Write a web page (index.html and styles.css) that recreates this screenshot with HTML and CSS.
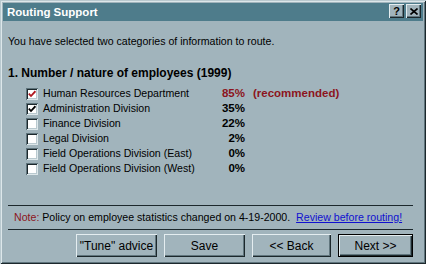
FILE: index.html
```html
<!DOCTYPE html>
<html lang="en">
<head>
    <meta charset="UTF-8">
    <title>Routing Support</title>
    <link rel="stylesheet" href="styles.css">
</head>
<body>
    <div class="window">
        <!-- Title bar -->
        <div class="titlebar">
            <span class="title">Routing Support</span>
            <div class="title-buttons">
                <button class="tbtn">?</button>
                <button class="tbtn">
                    <svg width="8" height="7" viewBox="0 0 8 7"><path d="M0.5 0.5 L7.5 6.5 M7.5 0.5 L0.5 6.5" stroke="#000" stroke-width="1.6" fill="none"/></svg>
                </button>
            </div>
        </div>

        <!-- Content -->
        <div class="content">
            <p class="intro">You have selected two categories of information to route.</p>
            <h2 class="heading">1. Number / nature of employees (1999)</h2>
            <div class="rows">
                <div class="row">
                    <span class="check"><svg width="8" height="8" viewBox="0 0 8 8"><path d="M0.8 3.6 L3 6 L7.4 1.2" stroke="#b01820" stroke-width="1.8" fill="none"/></svg></span>
                    <span class="label">Human Resources Department</span>
                    <span class="pct red">85%</span>
                    <span class="rec">(recommended)</span>
                </div>
                <div class="row">
                    <span class="check"><svg width="8" height="8" viewBox="0 0 8 8"><path d="M0.8 3.6 L3 6 L7.4 1.2" stroke="#000" stroke-width="1.8" fill="none"/></svg></span>
                    <span class="label">Administration Division</span>
                    <span class="pct">35%</span>
                </div>
                <div class="row">
                    <span class="check"></span>
                    <span class="label">Finance Division</span>
                    <span class="pct">22%</span>
                </div>
                <div class="row">
                    <span class="check"></span>
                    <span class="label">Legal Division</span>
                    <span class="pct">2%</span>
                </div>
                <div class="row">
                    <span class="check"></span>
                    <span class="label">Field Operations Division (East)</span>
                    <span class="pct">0%</span>
                </div>
                <div class="row">
                    <span class="check"></span>
                    <span class="label">Field Operations Division (West)</span>
                    <span class="pct">0%</span>
                </div>
            </div>
        </div>

        <!-- Footer -->
        <div class="footer">
            <div class="sep"></div>
            <p class="note"><span class="note-label">Note:</span> Policy on employee statistics changed on 4-19-2000. &nbsp;<a href="#">Review before routing!</a></p>
            <div class="sep"></div>
            <div class="buttons">
                <button class="btn btn-tune">"Tune" advice</button>
                <button class="btn btn-save">Save</button>
                <button class="btn btn-back">&lt;&lt; Back</button>
                <button class="btn btn-next">Next &gt;&gt;</button>
            </div>
        </div>
    </div>
</body>
</html>
```

FILE: styles.css
```css
body {
    margin: 0;
    padding: 0;
    background-color: #a1b4bc;
    font-family: "Liberation Sans", Arial, sans-serif;
    font-size: 10.6px;
    color: #000;
}
.window {
    width: 426px;
    height: 264px;
    box-sizing: border-box;
    padding: 3px;
    display: flex;
    flex-direction: column;
    background-color: #a1b4bc;
    box-shadow: inset 1px 1px 0 #b9c9cf, inset -1px -1px 0 #1c282c, inset 2px 2px 0 #dde7ea, inset -2px -2px 0 #5f747c;
}
.titlebar {
    height: 18px;
    background-color: #4e7c8b;
    display: flex;
    justify-content: space-between;
    align-items: flex-start;
    padding: 1px 2px 0 4px;
    box-sizing: border-box;
}
.title {
    color: #fff;
    font-weight: bold;
    font-size: 11.5px;
    line-height: 17px;
}
.title-buttons {
    display: flex;
    gap: 2px;
}
.tbtn {
    width: 15px;
    height: 14px;
    padding: 0;
    border: none;
    background-color: #a1b4bc;
    font-family: "Liberation Sans", Arial, sans-serif;
    font-weight: bold;
    font-size: 11px;
    line-height: 14px;
    color: #000;
    display: flex;
    align-items: center;
    justify-content: center;
    box-shadow: inset 1px 1px 0 #e4edf0, inset -1px -1px 0 #1c282c, inset -2px -2px 0 #61767e;
}
.content {
    flex: 1;
}
.intro {
    margin: 14px 0 0 5px;
    line-height: 13px;
}
.heading {
    margin: 19px 0 0 5px;
    font-size: 12px;
    font-weight: bold;
    line-height: 13px;
}
.rows {
    margin: 6px 0 0 23px;
}
.row {
    display: flex;
    align-items: center;
    height: 15px;
}
.check {
    width: 12px;
    height: 12px;
    box-sizing: border-box;
    background-color: #fff;
    display: flex;
    align-items: center;
    justify-content: center;
    box-shadow: inset 1px 1px 0 #5f747c, inset -1px -1px 0 #dde7ea, inset 2px 2px 0 #1c282c, inset -2px -2px 0 #b9c9cf;
}
.label {
    width: 171px;
    margin-left: 5px;
    line-height: 13px;
}
.pct {
    width: 31px;
    text-align: right;
    font-weight: bold;
    font-size: 11.5px;
    line-height: 13px;
}
.red, .rec {
    color: #8c1420;
}
.rec {
    font-weight: bold;
    font-size: 11.5px;
    margin-left: 8px;
    line-height: 13px;
}
.footer {
    margin-bottom: 4px;
}
.sep {
    height: 1px;
    background-color: #1c282c;
    margin: 0 10px 0 5px;
}
.note {
    margin: 5px 0 5px 11px;
    line-height: 13px;
}
.note-label {
    color: #8c1420;
}
.note a {
    color: #1010d0;
    text-decoration: underline;
}
.buttons {
    display: flex;
    justify-content: flex-end;
    gap: 7px;
    margin: 4px 10px 0 0;
}
.btn {
    height: 23px;
    padding: 0;
    border: none;
    background-color: #a1b4bc;
    font-family: "Liberation Sans", Arial, sans-serif;
    font-size: 12px;
    color: #000;
    box-shadow: inset 1px 1px 0 #e4edf0, inset -1px -1px 0 #1c282c, inset -2px -2px 0 #61767e;
}
.btn-tune, .btn-save {
    width: 81px;
}
.btn-back {
    width: 79px;
}
.btn-next {
    width: 75px;
    box-shadow: inset 0 0 0 1px #000, inset 2px 2px 0 #e4edf0, inset -2px -2px 0 #1c282c, inset -3px -3px 0 #61767e;
}
```
